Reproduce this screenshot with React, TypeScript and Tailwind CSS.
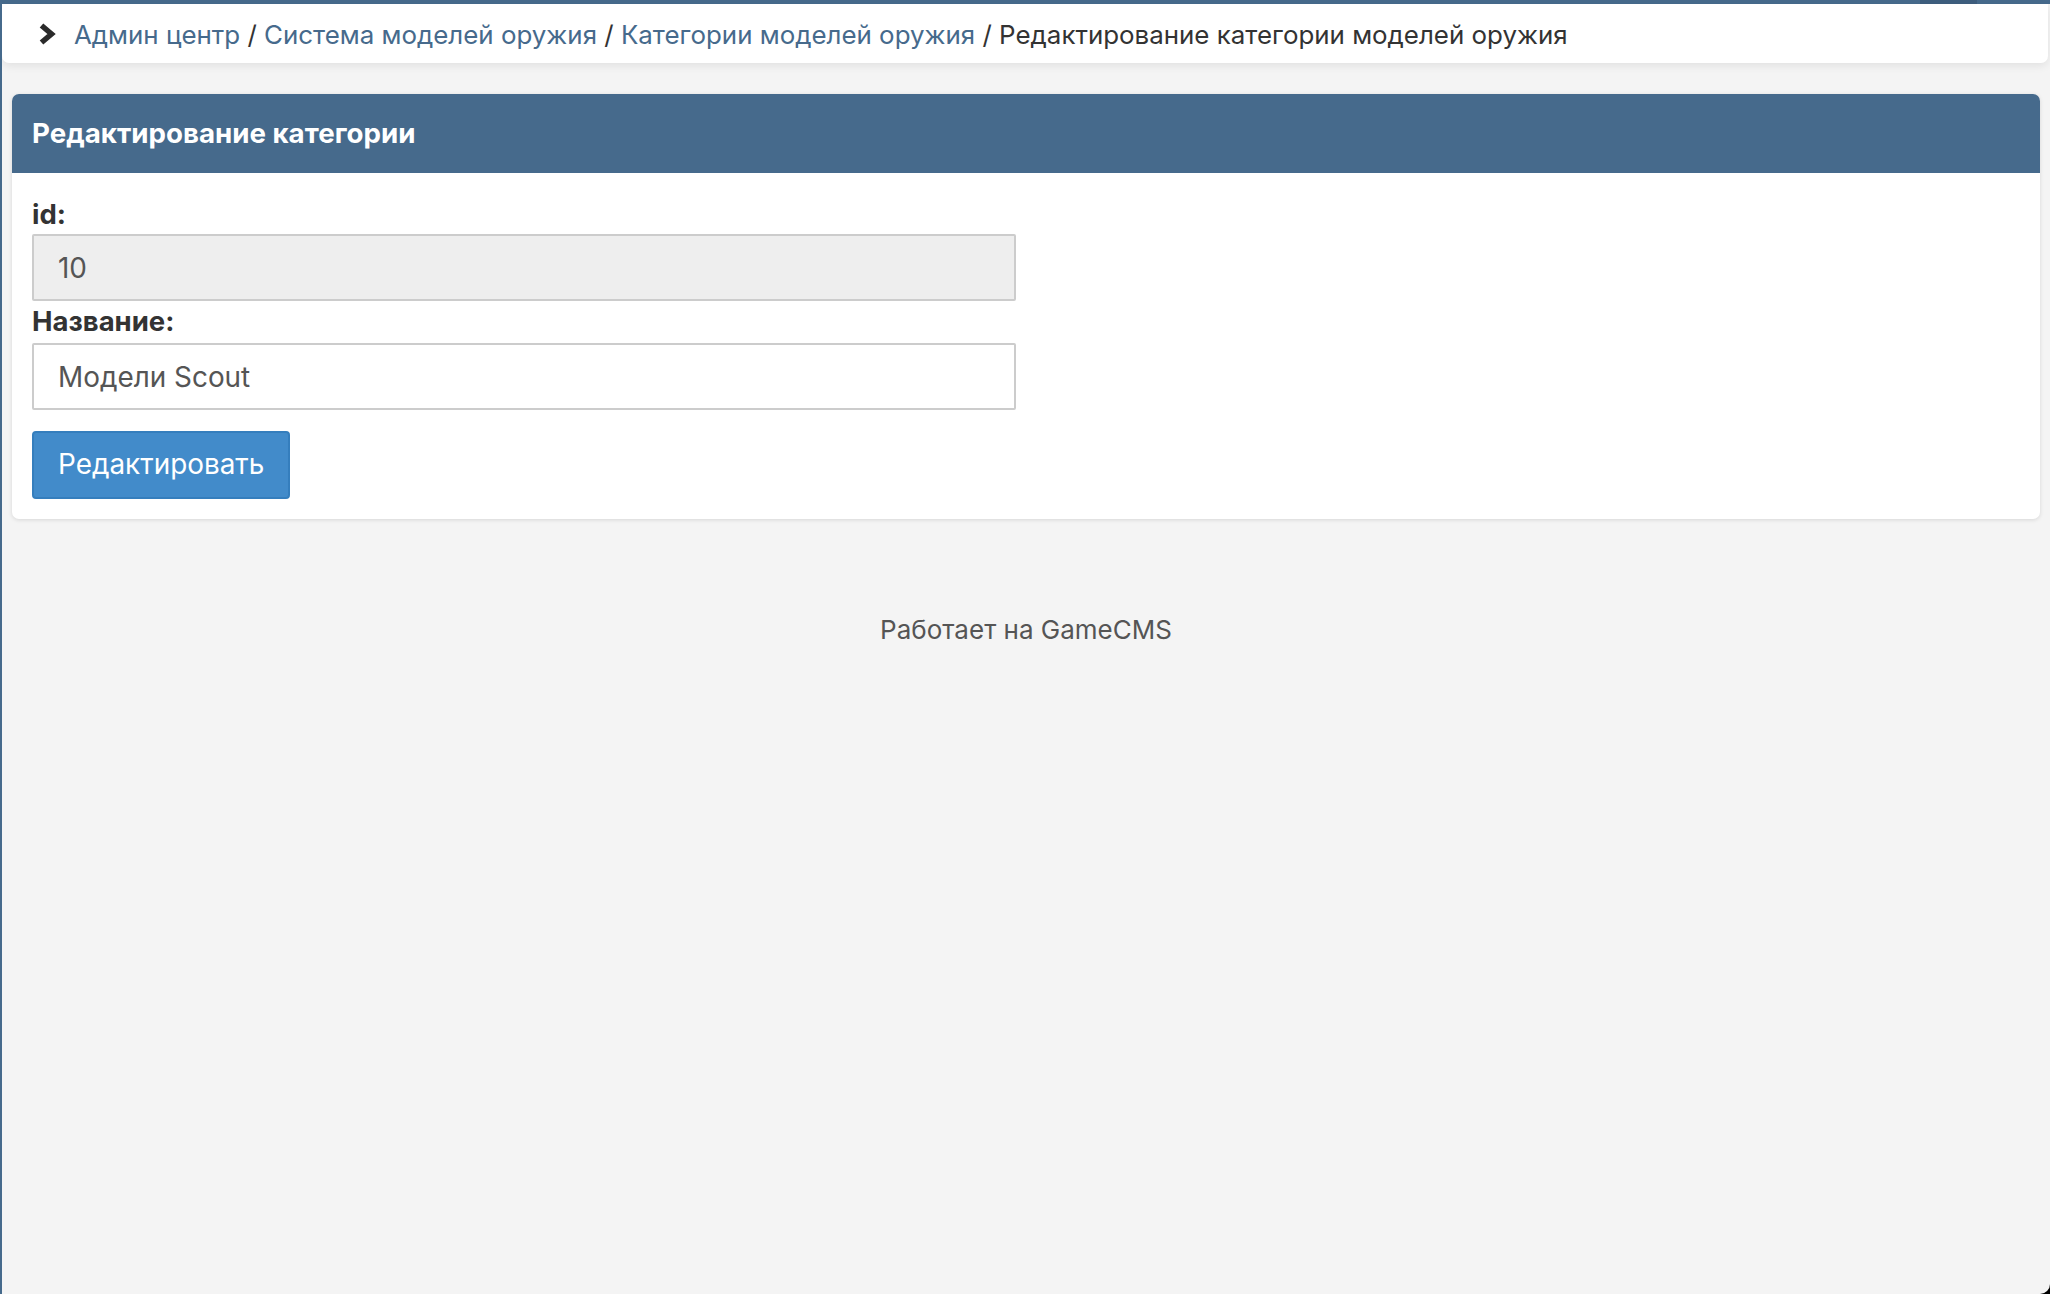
import React from "react";

const crumbs = ["Админ центр", "Система моделей оружия", "Категории моделей оружия"];

function Chevron() {
  return (
    <svg width="18" height="22" viewBox="0 0 18 22" className="shrink-0">
      <polyline points="3.5,2.5 13.5,11 3.5,19.5" fill="none" stroke="#2b2b2b" strokeWidth="5.5" strokeLinejoin="miter" />
    </svg>
  );
}

function App() {
  return (
    <div className="h-screen w-full bg-black font-['Inter',_'Noto_Sans',_sans-serif]">
      <div className="h-full bg-[#f4f4f4] border-l-2 border-[#466a8c] rounded-br-[10px] overflow-hidden flex flex-col">
        <div className="h-1 w-full shrink-0 flex bg-[#466a8c]">
          <div className="flex-1" />
          <div className="w-[57px] bg-[#3e5e7e]" />
          <div className="w-[73px]" />
        </div>

        <div className="h-[59px] mr-[2px] bg-white rounded-b-[7px] shadow-[0_3px_8px_rgba(0,0,0,0.08)] flex items-center pl-[36px] gap-[18px]">
          <Chevron />
          <div className="pt-[3px] text-[25.9px] text-[#333] whitespace-nowrap">
            {crumbs.map((c) => (
              <span key={c}>
                <a className="text-[#466a8c]">{c}</a> /{" "}
              </span>
            ))}
            <span>Редактирование категории моделей оружия</span>
          </div>
        </div>

        <div className="mx-[10px] mt-[31px] rounded-[7px] bg-white shadow-[0_1px_4px_rgba(0,0,0,0.12)]">
          <div className="h-[79px] bg-[#466a8c] rounded-t-[7px] flex items-center px-[20px]">
            <h2 className="text-white font-bold text-[27.7px]">Редактирование категории</h2>
          </div>
          <div className="px-[20px] pt-[22px] pb-[20px]">
            <label className="block text-[27.5px] font-bold text-[#333] leading-[39px]">id:</label>
            <div className="w-[984px] h-[67px] border-2 border-[#cccccc] bg-[#eeeeee] rounded-[2px] flex items-center pt-[2px] px-[24px] text-[27.9px] text-[#555]">
              10
            </div>
            <label className="block text-[27.5px] font-bold text-[#333] leading-[39px] mt-[1px] mb-[2px]">Название:</label>
            <input
              defaultValue="Модели Scout"
              className="block w-[984px] h-[67px] border-2 border-[#cccccc] bg-white rounded-[2px] px-[24px] text-[27.9px] text-[#555] outline-none"
            />
            <button className="block mt-[21px] h-[68px] px-[24px] bg-[#428bca] border-2 border-[#357ebd] rounded-[4px] text-white text-[27.9px]">
              Редактировать
            </button>
          </div>
        </div>

        <div className="mt-[91px] text-center text-[#555] text-[26px]">Работает на GameCMS</div>
      </div>
    </div>
  );
}

export default App;
